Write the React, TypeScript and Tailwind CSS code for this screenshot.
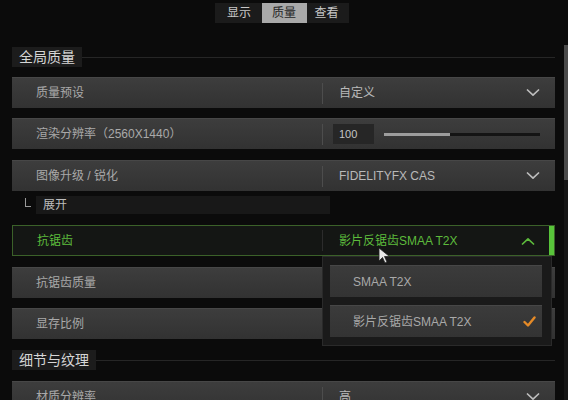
import React from "react";

const FONT = { fontFamily: '"Liberation Sans", "Noto Sans CJK SC", sans-serif' };

function Chevron({ up = false, color = "#bdbdbd" }: { up?: boolean; color?: string }) {
  return (
    <svg width="14" height="8" viewBox="0 0 14 8" fill="none">
      <path
        d={up ? "M1.5 7 L7 1.8 L12.5 7" : "M1.5 1 L7 6.2 L12.5 1"}
        stroke={color}
        strokeWidth="1.7"
        strokeLinecap="round"
        strokeLinejoin="round"
      />
    </svg>
  );
}

function SectionHeader({ title }: { title: string }) {
  return (
    <div className="flex items-center h-[20px]">
      <div className="h-full shrink-0 whitespace-nowrap bg-[#1c1c1c] flex items-center px-[7px] text-[14px] text-[#d6d6d6]">
        {title}
      </div>
      <div className="flex-1 h-px bg-[#262626]" />
    </div>
  );
}

function Row({
  label,
  children,
  className = "",
}: {
  label: string;
  children?: React.ReactNode;
  className?: string;
}) {
  return (
    <div
      className={`h-[31px] flex items-center bg-gradient-to-b from-[#3d3d3d] to-[#323232] border-t border-[#474747] ${className}`}
    >
      <div className="w-[310px] pl-6 text-[12px] text-[#a9a9a9] whitespace-nowrap">{label}</div>
      <div className="w-px h-[21px] bg-[#4d4d4d]" />
      <div className="flex-1 flex items-center h-full">{children}</div>
    </div>
  );
}

function SelectValue({ value }: { value: string }) {
  return (
    <div className="flex-1 flex items-center justify-between pl-4 pr-[15px] text-[12px] text-[#b9b9b9]">
      <span>{value}</span>
      <Chevron />
    </div>
  );
}

export default function App() {
  return (
    <div className="relative w-[568px] h-[400px] overflow-hidden bg-[#0b0b0b]" style={FONT}>
      {/* tabs */}
      <div className="flex justify-center pt-[3px] pr-[5px]">
        <div className="flex items-center h-[20px] bg-[#1b1b1b] px-[2px] text-[12px]">
          <div className="w-[45px] h-full flex items-center justify-center text-[#c8c8c8]">显示</div>
          <div className="w-[45px] h-full flex items-center justify-center bg-[#a9a9a9] text-[#262626]">质量</div>
          <div className="w-[40px] h-full flex items-center justify-center text-[#c8c8c8]">查看</div>
        </div>
      </div>

      <div className="pl-3 pr-[13px] flex flex-col">
        <div className="mt-[24px]">
          <SectionHeader title="全局质量" />
        </div>

        <div className="mt-[10px]">
          <Row label="质量预设">
            <SelectValue value="自定义" />
          </Row>
        </div>

        <div className="mt-[10px]">
          <Row label="渲染分辨率（2560X1440）">
            <div className="flex-1 flex items-center pl-[10px] pr-[15px]">
              <div className="w-[41px] h-[20px] bg-[#262626] flex items-center pl-[6px] text-[11px] text-[#c4c4c4]">
                100
              </div>
              <div className="flex-1 ml-[10px] h-[3px] bg-[#141414] flex">
                <div className="w-[42%] h-full bg-[#9d9d9d]" />
              </div>
            </div>
          </Row>
        </div>

        <div className="mt-[11px]">
          <Row label="图像升级 / 锐化">
            <SelectValue value="FIDELITYFX CAS" />
          </Row>
        </div>

        <div className="mt-[5px] flex items-center h-[18px]">
          <div className="w-[14px] h-full flex items-start pl-[13px] pt-[2px]">
            <div className="w-[6px] h-[9px] border-l border-b border-[#9a9a9a] shrink-0" />
          </div>
          <div className="w-[294px] h-full ml-[10px] bg-[#181818] flex items-center pl-[7px] text-[12px] text-[#bdbdbd]">
            展开
          </div>
        </div>

        <div className="mt-[11px] relative">
          <div className="h-[31px] flex items-center bg-[#141614] border border-[#3b6129]">
            <div className="w-[309px] pl-6 text-[12px] text-[#5dbb3c]">抗锯齿</div>
            <div className="w-px h-[21px] bg-[#2c2c2c]" />
            <div className="flex-1 flex items-center justify-between pl-4 pr-[14px] text-[12px] text-[#5dbb3c]">
              <span>影片反锯齿SMAA T2X</span>
              <Chevron up color="#5dbb3c" />
            </div>
            <div className="w-[5px] h-full bg-[#58c43a]" />
          </div>
        </div>

        <div className="mt-[11px]">
          <Row label="抗锯齿质量" />
        </div>

        <div className="mt-[10px]">
          <Row label="显存比例" />
        </div>

        <div className="mt-[11px]">
          <SectionHeader title="细节与纹理" />
        </div>

        <div className="mt-[11px]">
          <Row label="材质分辨率">
            <SelectValue value="高" />
          </Row>
        </div>
      </div>

      {/* dropdown menu */}
      <div className="absolute left-[322px] top-[256px] w-[230px] h-[90px] bg-[#1a1a1a] border border-[#2a2a2a] pt-[8px] pl-[7px] pr-[9px] flex flex-col gap-[8px]">
        <div className="h-[32px] bg-gradient-to-b from-[#3b3b3b] to-[#333333] border-t border-[#474747] flex items-center pl-[23px] text-[12px] text-[#a9a9a9]">
          SMAA T2X
        </div>
        <div className="h-[32px] bg-gradient-to-b from-[#3b3b3b] to-[#333333] border-t border-[#474747] flex items-center justify-between pl-[23px] pr-[6px] text-[12px] text-[#a9a9a9]">
          <span>影片反锯齿SMAA T2X</span>
          <svg width="13" height="11" viewBox="0 0 13 11" fill="none">
            <path d="M1.5 6 L5 9.5 L11.5 1.5" stroke="#e58a27" strokeWidth="2.4" strokeLinecap="round" strokeLinejoin="round" />
          </svg>
        </div>
      </div>

      {/* mouse cursor */}
      <svg className="absolute left-[378px] top-[247px]" width="13" height="17" viewBox="0 0 13 17">
        <path d="M1 1 L1 14 L4.5 10.5 L7 16 L9 15 L6.5 9.5 L11.5 9.5 Z" fill="#e8e8e8" stroke="#222" strokeWidth="0.8" />
      </svg>

      {/* scrollbar */}
      <div className="absolute right-0 top-[45px] w-[4px] h-[355px] bg-[#151515]">
        <div className="w-full h-[135px] bg-[#4a4a4a]" />
      </div>
    </div>
  );
}
